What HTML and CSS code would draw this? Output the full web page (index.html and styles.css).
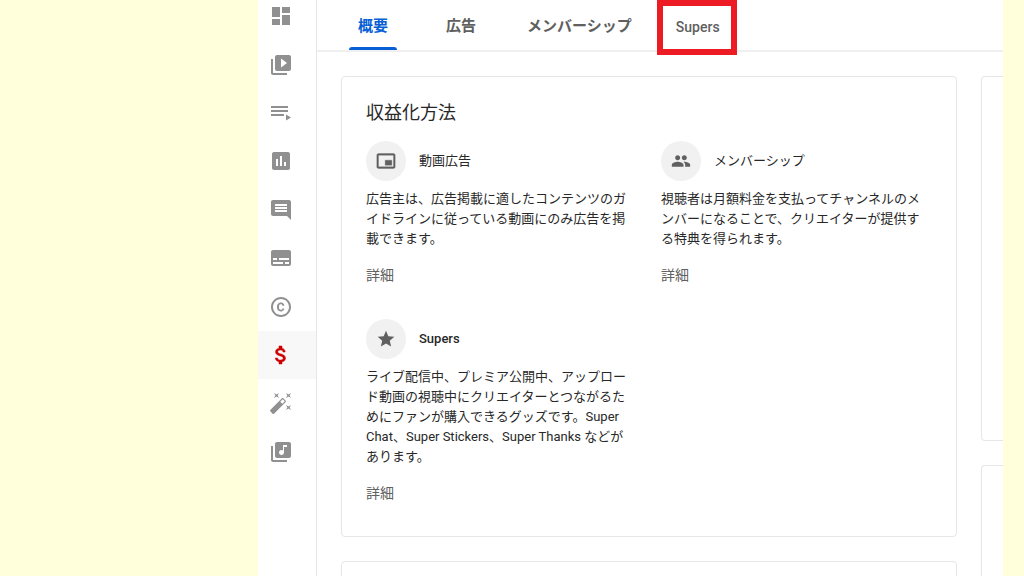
FILE: index.html
```html
<!DOCTYPE html>
<html lang="ja">
<head>
<meta charset="utf-8">
<title>収益化</title>
<link rel="stylesheet" href="styles.css">
</head>
<body>
<div class="studio">
  <nav class="sidebar" aria-label="メニュー">
    <a class="nav-item" href="#" aria-label="ダッシュボード"><svg class="icon" viewBox="0 0 24 24"><path d="M3 13h8V3H3v10zm0 8h8v-6H3v6zm10 0h8V11h-8v10zm0-18v6h8V3h-8z"/></svg></a>
    <a class="nav-item" href="#" aria-label="コンテンツ"><svg class="icon" viewBox="0 0 24 24"><path d="M4 6H2v14c0 1.100.9 2 2 2h14v-2H4V6z"/><path d="M20 2H8c-1.100 0-2 .9-2 2v12c0 1.100.9 2 2 2h12c1.100 0 2-.9 2-2V4c0-1.100-.9-2-2-2zm-8 12.500v-9l6 4.500-6 4.500z"/></svg></a>
    <a class="nav-item" href="#" aria-label="再生リスト"><svg class="icon" viewBox="0 0 24 24"><path d="M2 5h17v2H2zM2 9h17v2H2zM2 13h13v2H2zM17 13.500l5 3-5 3z"/></svg></a>
    <a class="nav-item" href="#" aria-label="アナリティクス"><svg class="icon" viewBox="0 0 24 24"><path d="M19 3H5c-1.100 0-2 .9-2 2v14c0 1.100.9 2 2 2h14c1.100 0 2-.9 2-2V5c0-1.100-.9-2-2-2zM9 17H7v-7h2v7zm4 0h-2V7h2v10zm4 0h-2v-4h2v4z"/></svg></a>
    <a class="nav-item" href="#" aria-label="コメント"><svg class="icon" viewBox="0 0 24 24"><path d="M22 4c0-1.100-.9-2-2-2H4c-1.100 0-2 .9-2 2v12c0 1.100.9 2 2 2h14l4 4V4zm-4 10H6v-2h12v2zm0-3H6V9h12v2zm0-3H6V6h12v2z"/></svg></a>
    <a class="nav-item" href="#" aria-label="字幕"><svg class="icon" viewBox="0 0 24 24"><path d="M20 4H4c-1.100 0-2 .9-2 2v12c0 1.100.9 2 2 2h16c1.100 0 2-.9 2-2V6c0-1.100-.9-2-2-2zM4 12h4v2H4v-2zm10 6H4v-2h10v2zm6 0h-4v-2h4v2zm0-4H10v-2h10v2z"/></svg></a>
    <a class="nav-item" href="#" aria-label="著作権"><svg class="icon" viewBox="0 0 24 24"><path d="M10.080 10.860c.05-.33.16-.62.3-.87s.34-.46.59-.62c.24-.15.54-.22.91-.23.23.01.44.05.63.13.2.09.38.21.52.36s.25.33.34.53.13.42.14.64h1.790c-.02-.47-.11-.9-.28-1.290s-.4-.73-.7-1.010-.66-.5-1.080-.66-.88-.23-1.390-.23c-.65 0-1.220.11-1.700.34s-.88.53-1.200.92-.56.84-.71 1.360S8 11.290 8 11.870v.27c0 .58.08 1.120.23 1.640s.39.970.71 1.350.72.690 1.200.91c.48.22 1.050.34 1.700.34.47 0 .91-.08 1.320-.23s.77-.36 1.080-.63.56-.58.740-.94.29-.74.3-1.150h-1.790c-.01.21-.06.4-.15.58s-.21.33-.36.46-.32.23-.52.3c-.19.07-.39.09-.6.1-.36-.01-.66-.08-.89-.23-.25-.16-.45-.37-.59-.62s-.25-.55-.3-.88-.08-.67-.08-1v-.27c0-.35.03-.68.08-1.010zM12 2C6.480 2 2 6.480 2 12s4.480 10 10 10 10-4.480 10-10S17.520 2 12 2zm0 18c-4.410 0-8-3.590-8-8s3.590-8 8-8 8 3.590 8 8-3.590 8-8 8z"/></svg></a>
    <a class="nav-item nav-item-active" href="#" aria-label="収益化" aria-current="page"><svg class="icon" viewBox="0 0 24 24"><path stroke="currentColor" stroke-width=".5" d="M11.800 10.900c-2.270-.59-3-1.200-3-2.150 0-1.090 1.010-1.850 2.700-1.850 1.780 0 2.440.85 2.500 2.100h2.210c-.07-1.720-1.120-3.300-3.210-3.810V3h-3v2.160c-1.940.42-3.500 1.680-3.500 3.610 0 2.310 1.910 3.460 4.700 4.130 2.500.6 3 1.480 3 2.410 0 .69-.49 1.790-2.700 1.790-2.060 0-2.870-.92-2.980-2.100h-2.200c.12 2.190 1.760 3.420 3.680 3.830V21h3v-2.150c1.950-.37 3.500-1.500 3.500-3.550 0-2.840-2.430-3.810-4.700-4.400z"/></svg></a>
    <a class="nav-item" href="#" aria-label="カスタマイズ"><svg class="icon" viewBox="0 0 24 24"><path d="M7.500 5.600L10 7 8.600 4.500 10 2 7.500 3.400 5 2l1.400 2.500L5 7zm12 9.800L17 14l1.400 2.500L17 19l2.500-1.400L22 19l-1.400-2.500L22 14zM22 2l-2.500 1.400L17 2l1.400 2.500L17 7l2.500-1.400L22 7l-1.400-2.500zm-7.630 5.290c-.39-.39-1.020-.39-1.410 0L1.290 18.960c-.39.39-.39 1.020 0 1.410l2.340 2.340c.39.39 1.020.39 1.410 0L16.700 11.050c.39-.39.39-1.020 0-1.410l-2.330-2.350zm-1.030 5.490l-2.120-2.120 2.440-2.440 2.120 2.120-2.440 2.440z"/></svg></a>
    <a class="nav-item" href="#" aria-label="オーディオ ライブラリ"><svg class="icon" viewBox="0 0 24 24"><path d="M20 2H8c-1.100 0-2 .9-2 2v12c0 1.100.9 2 2 2h12c1.100 0 2-.9 2-2V4c0-1.100-.9-2-2-2zm-2 5h-3v5.500c0 1.380-1.120 2.500-2.500 2.500S10 13.880 10 12.500s1.120-2.500 2.500-2.500c.57 0 1.080.19 1.500.51V5h4v2zM4 6H2v14c0 1.100.9 2 2 2h14v-2H4V6z"/></svg></a>
  </nav>
  <main class="main">
    <div class="tabs" role="tablist">
      <button class="tab tab-active" role="tab" aria-selected="true">概要</button>
      <button class="tab" role="tab" aria-selected="false">広告</button>
      <button class="tab" role="tab" aria-selected="false">メンバーシップ</button>
      <button class="tab tab-marked" role="tab" aria-selected="false">Supers</button>
    </div>
    <div class="board">
      <div class="column">
        <section class="card">
          <h1 class="card-title">収益化方法</h1>
          <div class="methods">
            <article class="method">
              <header class="method-head">
                <span class="badge"><svg class="badge-icon" viewBox="0 0 24 24"><path stroke="#606060" stroke-width=".4" d="M19 11h-8v6h8v-6zm4 8V4.980C23 3.880 22.100 3 21 3H3c-1.100 0-2 .88-2 1.980V19c0 1.100.9 2 2 2h18c1.100 0 2-.9 2-2zm-2 .02H3V4.970h18v14.050z"/></svg></span>
                <h2 class="method-name">動画広告</h2>
              </header>
              <p class="method-text">広告主は、広告掲載に適したコンテンツのガイドラインに従っている動画にのみ広告を掲載できます。</p>
              <a class="more" href="#">詳細</a>
            </article>
            <article class="method">
              <header class="method-head">
                <span class="badge"><svg class="badge-icon" viewBox="0 0 24 24"><path d="M16 11c1.660 0 2.990-1.340 2.990-3S17.660 5 16 5s-3 1.340-3 3 1.340 3 3 3zm-8 0c1.660 0 2.990-1.340 2.990-3S9.660 5 8 5 5 6.340 5 8s1.340 3 3 3zm0 2c-2.330 0-7 1.170-7 3.500V19h14v-2.500c0-2.330-4.670-3.500-7-3.500zm8 0c-.29 0-.62.02-.97.05 1.160.84 1.970 1.970 1.970 3.450V19h6v-2.500c0-2.330-4.670-3.500-7-3.500z"/></svg></span>
                <h2 class="method-name">メンバーシップ</h2>
              </header>
              <p class="method-text">視聴者は月額料金を支払ってチャンネルのメンバーになることで、クリエイターが提供する特典を得られます。</p>
              <a class="more" href="#">詳細</a>
            </article>
            <article class="method">
              <header class="method-head">
                <span class="badge"><svg class="badge-icon" viewBox="0 0 24 24"><path d="M12 17.270L18.180 21l-1.640-7.030L22 9.240l-7.190-.61L12 2 9.190 8.630 2 9.240l5.460 4.730L5.820 21z"/></svg></span>
                <h2 class="method-name method-name-latin">Supers</h2>
              </header>
              <p class="method-text">ライブ配信中、プレミア公開中、アップロード動画の視聴中にクリエイターとつながるためにファンが購入できるグッズです。Super Chat、Super Stickers、Super Thanks などがあります。</p>
              <a class="more" href="#">詳細</a>
            </article>
          </div>
        </section>
        <section class="card card-rest"></section>
      </div>
      <div class="column">
        <section class="card card-side"></section>
        <section class="card card-side card-rest"></section>
      </div>
    </div>
  </main>
</div>
</body>
</html>
```
FILE: styles.css
```css
* {
  box-sizing: border-box;
}

body {
  margin: 0;
  background: #ffffdb;
  color: #282828;
  font-family: Roboto, "Noto Sans CJK JP", sans-serif;
  font-size: 13px;
  line-height: 20px;
}

h1,
h2,
p {
  margin: 0;
}

.studio {
  display: flex;
  height: 100vh;
  padding: 0 21px 0 258px;
  overflow: hidden;
}

.sidebar {
  flex: none;
  width: 59px;
  background: #fff;
  border-right: 1px solid #e6e6e6;
  display: grid;
  grid-template-rows: repeat(10, 1fr);
  height: 592px;
  margin-top: -8px;
  padding-bottom: 108px;
}

.nav-item {
  display: flex;
  align-items: center;
  padding-left: 11px;
  color: #909090;
}

.nav-item-active {
  background: #f8f8f8;
  color: #cc0000;
}

.icon {
  width: 24px;
  height: 24px;
  fill: currentColor;
}

.main {
  flex: 1;
  min-width: 0;
  background: #fff;
  display: flex;
  flex-direction: column;
}

.tabs {
  display: flex;
  flex: none;
  height: 52px;
  padding-left: 12px;
  border-bottom: 2px solid #f0f0f0;
}

.tab {
  position: relative;
  min-width: 88px;
  padding: 2px 22px 0;
  border: 0;
  background: none;
  color: #606060;
  font: 700 15px/20px Roboto, "Noto Sans CJK JP", sans-serif;
}

.tab-active {
  color: #065fd4;
}

.tab-active::after {
  content: "";
  position: absolute;
  left: 20px;
  right: 20px;
  bottom: 0;
  height: 3px;
  border-radius: 3px 3px 0 0;
  background: #065fd4;
}

.tab-marked {
  padding-top: 4px;
  font-size: 14px;
  font-weight: 500;
}

.tab-marked::after {
  content: "";
  position: absolute;
  inset: 0 5px -5px 3px;
  border: 6px solid #ed1c24;
}

.board {
  flex: 1;
  min-height: 0;
  display: grid;
  grid-template-columns: minmax(0, 1fr) 22px;
  gap: 24px;
  padding: 24px 0 0 24px;
}

.column {
  display: flex;
  flex-direction: column;
  gap: 24px;
  min-height: 0;
}

.card {
  flex: none;
  padding: 24px 24px 33px;
  border: 1px solid #e6e6e6;
  border-radius: 4px;
}

.card-side {
  height: 365px;
  padding: 0;
  border-right: 0;
  border-radius: 4px 0 0 4px;
}

.card-rest {
  flex: 1 0 120px;
}

.card-title {
  margin-bottom: 16px;
  font-size: 18px;
  font-weight: 400;
  line-height: 24px;
}

.methods {
  display: grid;
  grid-template-columns: 1fr 1fr;
  gap: 34px 24px;
}

.method-head {
  display: flex;
  align-items: center;
  gap: 13px;
  margin-bottom: 8px;
}

.badge {
  display: flex;
  align-items: center;
  justify-content: center;
  width: 40px;
  height: 40px;
  border-radius: 50%;
  background: #f1f1f1;
}

.badge-icon {
  width: 20px;
  height: 20px;
  fill: #606060;
}

.method-name {
  font-size: 13px;
  font-weight: 400;
}

.method-name-latin {
  font-weight: 500;
}

.method-text {
  margin-bottom: 16px;
  padding-right: 4px;
}

.more {
  display: block;
  width: max-content;
  color: #606060;
  font-size: 14px;
  text-decoration: none;
}
```
